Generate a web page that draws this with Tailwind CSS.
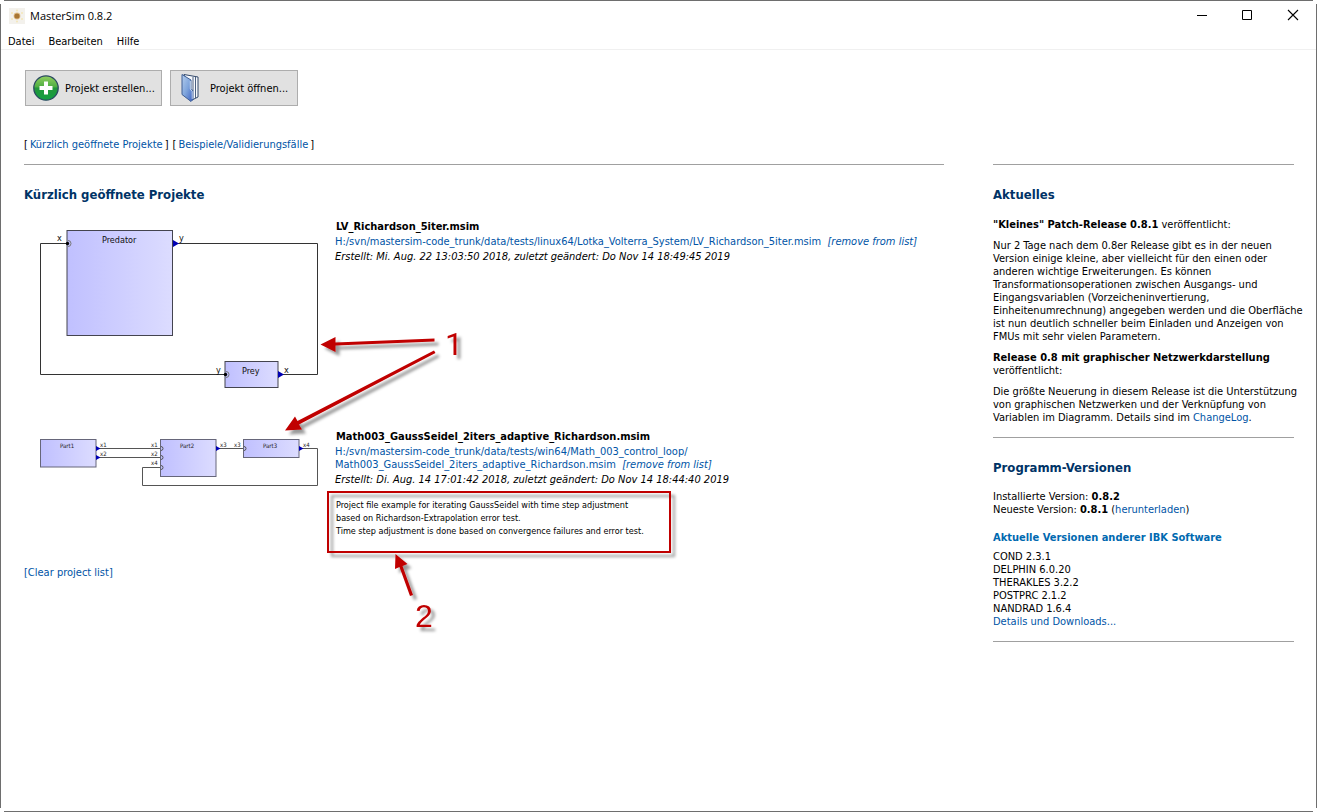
<!DOCTYPE html>
<html lang="de">
<head>
<meta charset="utf-8">
<title>MasterSim 0.8.2</title>
<script src="https://cdn.jsdelivr.net/npm/@tailwindcss/browser@4"></script>
</head>
<body class="flex min-h-screen flex-col bg-white font-['DejaVu_Sans_Condensed','Noto_Sans',sans-serif] text-[11px] leading-[13px] text-black">
<div class="mx-1 h-px bg-[#6e6e6e]"></div>
<div class="my-[3px] flex flex-1 flex-col border-x border-[#6e6e6e]">

  <header class="border-b border-[#f0f0f0]">
    <div class="flex h-6 items-center justify-between pl-2">
      <div class="flex items-center gap-[5px]">
        <svg class="size-4" viewBox="0 0 16 16" aria-hidden="true">
          <rect width="16" height="16" fill="#f3f1ec"/>
          <g fill="#f5e6b8"><circle cx="8" cy="2.5" r="1"/><circle cx="13" cy="5" r="1"/><circle cx="13" cy="11" r="1"/><circle cx="8" cy="13.5" r="1"/><circle cx="3" cy="11" r="1"/><circle cx="3" cy="5" r="1"/></g>
          <circle cx="8" cy="8" r="3.4" fill="#e0bf8c"/><circle cx="8" cy="8" r="2.6" fill="#a87532"/>
        </svg>
        <h1 class="font-['Open_Sans',sans-serif] text-[11px] leading-4">MasterSim 0.8.2</h1>
      </div>
      <div class="flex self-start">
        <button aria-label="Minimieren" class="flex h-[22px] w-[45px] items-center justify-center"><svg class="h-3 w-3" viewBox="0 0 12 12"><path d="M1 6.5h10" stroke="#000"/></svg></button>
        <button aria-label="Maximieren" class="flex h-[22px] w-[45px] items-center justify-center"><svg class="h-3 w-3" viewBox="0 0 12 12"><path d="M1.500 1.500h9v9h-9z" fill="none" stroke="#000"/></svg></button>
        <button aria-label="Schließen" class="flex h-[22px] w-[47px] items-center justify-center"><svg class="h-3 w-3" viewBox="0 0 12 12"><path d="M1 1l10 10M11 1L1 11" stroke="#000" stroke-width="1.100"/></svg></button>
      </div>
    </div>
    <nav class="flex h-[21px] items-center gap-[14px] pl-[7px] pt-[5px]">
      <button>Datei</button>
      <button>Bearbeiten</button>
      <button>Hilfe</button>
    </nav>
  </header>

  <main class="flex-1 pt-5 pr-[22px] pl-[23px]">
    <div class="flex gap-2 pl-px">
      <button class="flex h-9 w-[137px] items-center gap-[6px] border border-[#adadad] bg-[#e1e1e1] pl-[7px] whitespace-nowrap">
        <svg class="size-[26px] shrink-0" viewBox="0 0 26 26" aria-hidden="true">
          <defs><linearGradient id="plus" x2="0" y2="1"><stop stop-color="#93cf60"/><stop offset=".45" stop-color="#4fae43"/><stop offset=".5" stop-color="#23963a"/><stop offset="1" stop-color="#12a043"/></linearGradient></defs>
          <circle cx="13" cy="13" r="12.200" fill="url(#plus)" stroke="#2c4a63" stroke-width="1.300"/>
          <path d="M11 6.500h4V11h4.500v4H15v4.500h-4V15H6.500v-4H11z" fill="#fff"/>
        </svg>
        <span class="pt-px">Projekt erstellen...</span>
      </button>
      <button class="flex h-9 w-32 items-center gap-[6px] border border-[#adadad] bg-[#e1e1e1] pl-[7px] whitespace-nowrap">
        <svg class="h-[30px] w-[26px] shrink-0" viewBox="0 0 26 30" aria-hidden="true">
          <defs><linearGradient id="folder" x2="1" y2="1"><stop stop-color="#b4cdec"/><stop offset=".5" stop-color="#7fa5dc"/><stop offset="1" stop-color="#3a5fc0"/></linearGradient></defs>
          <path d="M6 1.500L20 4V24L14 27z" fill="#f7f9fc" stroke="#33496b"/>
          <path d="M17.500 4v21M15 4v14" fill="none" stroke="#4a5f80"/>
          <path d="M4 1.500L13 7V15.500L15 18V26.500L13 28.500L4 21.500z" fill="url(#folder)" stroke="#3f5f94"/>
          <path d="M12.300 8V16L14.200 18.500V26" fill="none" stroke="#dde9f8" stroke-width=".8"/>
        </svg>
        <span class="pt-px">Projekt öffnen...</span>
      </button>
    </div>

    <nav class="mt-8 flex gap-1 leading-[14px]">
      <div class="flex gap-[2px]">[<a href="#recent" class="text-[#0054a6]">Kürzlich geöffnete Projekte</a>]</div>
      <div class="flex gap-[2px]">[<a href="#examples" class="text-[#0054a6]">Beispiele/Validierungsfälle</a>]</div>
    </nav>

    <div class="mt-3 flex gap-[49px]">
      <section id="recent" class="relative flex-1 border-t border-[#a0a0a0] pt-[22px]">
        <h2 class="text-[13px] leading-4 font-bold text-[#003366]">Kürzlich geöffnete Projekte</h2>

        <article class="mt-[15px] grid min-h-[210px] grid-cols-[311px_1fr]">
          <svg class="h-[190px] w-[300px]" viewBox="24 218 300 190" role="img" aria-label="Lotka-Volterra-Netzwerk">
            <defs><linearGradient id="blk"><stop stop-color="#c0c0ff"/><stop offset="1" stop-color="#dcdcff"/></linearGradient></defs>
            <g fill="none" stroke="#333"><path d="M67 243.500H40.500V374.500H225M174 243.500H317.500V374.500H280"/></g>
            <g fill="url(#blk)" stroke="#44444f"><rect x="67" y="230.500" width="105.500" height="105"/><rect x="225" y="361.500" width="53" height="26"/></g>
            <g fill="none" stroke="#777"><path d="M68 240.500a3 3 0 0 1 0 6M226 371.500a3 3 0 0 1 0 6"/></g>
            <circle cx="67.500" cy="243.500" r="1.700"/><circle cx="225.500" cy="374.500" r="1.700"/>
            <path d="M173 240l6 3.500-6 3.500zM278 371l6 3.500-6 3.500z" fill="#0000b4"/>
            <g font-size="9" fill="#111"><text x="102" y="243">Predator</text><text x="242" y="374">Prey</text><text x="57" y="241">x</text><text x="179" y="241">y</text><text x="216" y="373">y</text><text x="284" y="373">x</text></g>
          </svg>
          <div class="pt-px">
            <h3 class="pl-px leading-[15px] font-bold">LV_Richardson_5iter.msim</h3>
            <p class="mt-px text-[#0054a6]"><a href="#">H:/svn/mastersim-code_trunk/data/tests/linux64/Lotka_Volterra_System/LV_Richardson_5iter.msim</a>&nbsp; <a href="#" class="italic">[remove from list]</a></p>
            <p class="mt-px leading-[15px] italic">Erstellt: Mi. Aug. 22 13:03:50 2018, zuletzt geändert: Do Nov 14 18:49:45 2019</p>
          </div>
        </article>

        <article class="grid min-h-[138px] grid-cols-[311px_1fr]">
          <svg class="h-[80px] w-[300px]" viewBox="24 428 300 80" role="img" aria-label="Math003-Netzwerk">
            <g fill="none" stroke="#555"><path d="M97 448.500h64M97 457.500h64M161 467.500h-18.500v18h175v-37H300M217 448.500h27"/></g>
            <g fill="url(#blk)" stroke="#66667a"><rect x="40.500" y="439.500" width="55.500" height="27.500"/><rect x="160.500" y="439.500" width="55.500" height="37"/><rect x="243.500" y="439.500" width="55.500" height="18"/></g>
            <g fill="none" stroke="#555"><path d="M161 446.500a2 2 0 0 1 0 4M161 455.500a2 2 0 0 1 0 4M161 465.500a2 2 0 0 1 0 4M244 446.500a2 2 0 0 1 0 4"/></g>
            <path d="M96 446l4.500 2.500-4.500 2.500zM96 455l4.500 2.500-4.500 2.500zM216 446l4.500 2.500-4.500 2.500zM299 446l4.500 2.500-4.500 2.500z" fill="#0000b4"/>
            <g font-size="6" fill="#222"><text x="60" y="448">Part1</text><text x="180" y="448">Part2</text><text x="263" y="448">Part3</text><text x="100" y="447">x1</text><text x="100" y="456">x2</text><text x="151" y="447">x1</text><text x="151" y="456">x2</text><text x="151" y="465">x4</text><text x="220" y="447">x3</text><text x="234" y="447">x3</text><text x="303" y="447">x4</text></g>
          </svg>
          <div class="pt-px">
            <h3 class="pl-px leading-[15px] font-bold">Math003_GaussSeidel_2iters_adaptive_Richardson.msim</h3>
            <p class="mt-px text-[#0054a6]"><a href="#">H:/svn/mastersim-code_trunk/data/tests/win64/Math_003_control_loop/<br>Math003_GaussSeidel_2iters_adaptive_Richardson.msim</a>&nbsp; <a href="#" class="italic">[remove from list]</a></p>
            <p class="mt-px leading-[15px] italic">Erstellt: Di. Aug. 14 17:01:42 2018, zuletzt geändert: Do Nov 14 18:44:40 2019</p>
            <p class="mt-3 pl-px text-[9px]">Project file example for iterating GaussSeidel with time step adjustment<br>based on Richardson-Extrapolation error test.<br>Time step adjustment is done based on convergence failures and error test.</p>
          </div>
        </article>
        <a href="#" class="leading-[14px] text-[#0054a6]">[Clear project list]</a>

        <svg class="pointer-events-none absolute top-0 left-0 h-[480px] w-[680px]" viewBox="24 165 680 480" aria-hidden="true">
          <defs><filter id="sh" x="-20%" y="-20%" width="150%" height="150%"><feDropShadow dx="4" dy="4" stdDeviation="1.500" flood-color="#000" flood-opacity=".4"/></filter></defs>
          <g filter="url(#sh)" fill="#c00000">
            <path d="M320.500 344.500l15-7.500v5.500l99-4v3l-99 4v6.500z"/>
            <path d="M285 430.500l10-14 2.500 4.500L434 350.500l1.500 2.500L299 424.500l3 5z"/>
            <path d="M395.500 554l12 10-5 2 10.500 29-3 1-10.500-29-4.500 2z"/>
            <rect x="328" y="492" width="342" height="60" fill="none" stroke="#c00000" stroke-width="2"/>
            <text x="445" y="355" font-family="Roboto, sans-serif" font-size="32">1</text>
            <text x="415" y="627" font-family="Liberation Sans, sans-serif" font-size="32">2</text>
          </g>
        </svg>
      </section>

      <aside class="w-[301px] shrink-0 whitespace-nowrap">
        <section class="border-t border-[#a0a0a0] pt-[22px] pb-[13px]">
          <h2 class="text-[13px] leading-4 font-bold text-[#003366]">Aktuelles</h2>
          <p class="mt-[15px]"><b>"Kleines" Patch-Release 0.8.1</b> veröffentlicht:</p>
          <p class="mt-2">Nur 2 Tage nach dem 0.8er Release gibt es in der neuen<br>Version einige kleine, aber vielleicht für den einen oder<br>anderen wichtige Erweiterungen. Es können<br>Transformationsoperationen zwischen Ausgangs- und<br>Eingangsvariablen (Vorzeicheninvertierung,<br>Einheitenumrechnung) angegeben werden und die Oberfläche<br>ist nun deutlich schneller beim Einladen und Anzeigen von<br>FMUs mit sehr vielen Parametern.</p>
          <p class="mt-2"><b>Release 0.8 mit graphischer Netzwerkdarstellung</b><br>veröffentlicht:</p>
          <p class="mt-2">Die größte Neuerung in diesem Release ist die Unterstützung<br>von graphischen Netzwerken und der Verknüpfung von<br>Variablen im Diagramm. Details sind im <a href="#" class="text-[#0054a6]">ChangeLog</a>.</p>
        </section>
        <section class="border-y border-[#a0a0a0] pt-[22px] pb-[13px]">
          <h2 class="text-[13px] leading-4 font-bold text-[#003366]">Programm-Versionen</h2>
          <p class="mt-[14px]">Installierte Version: <b>0.8.2</b><br>Neueste Version: <b>0.8.1</b> (<a href="#" class="text-[#0054a6]">herunterladen</a>)</p>
          <h3 class="mt-[15px] leading-[14px] font-bold text-[#0069b0]">Aktuelle Versionen anderer IBK Software</h3>
          <p class="mt-[5px]">COND 2.3.1<br>DELPHIN 6.0.20<br>THERAKLES 3.2.2<br>POSTPRC 2.1.2<br>NANDRAD 1.6.4<br><a href="#" class="text-[#0054a6]">Details und Downloads...</a></p>
        </section>
      </aside>
    </div>
  </main>
</div>
<div class="mx-1 h-px bg-[#6e6e6e]"></div>
</body>
</html>
